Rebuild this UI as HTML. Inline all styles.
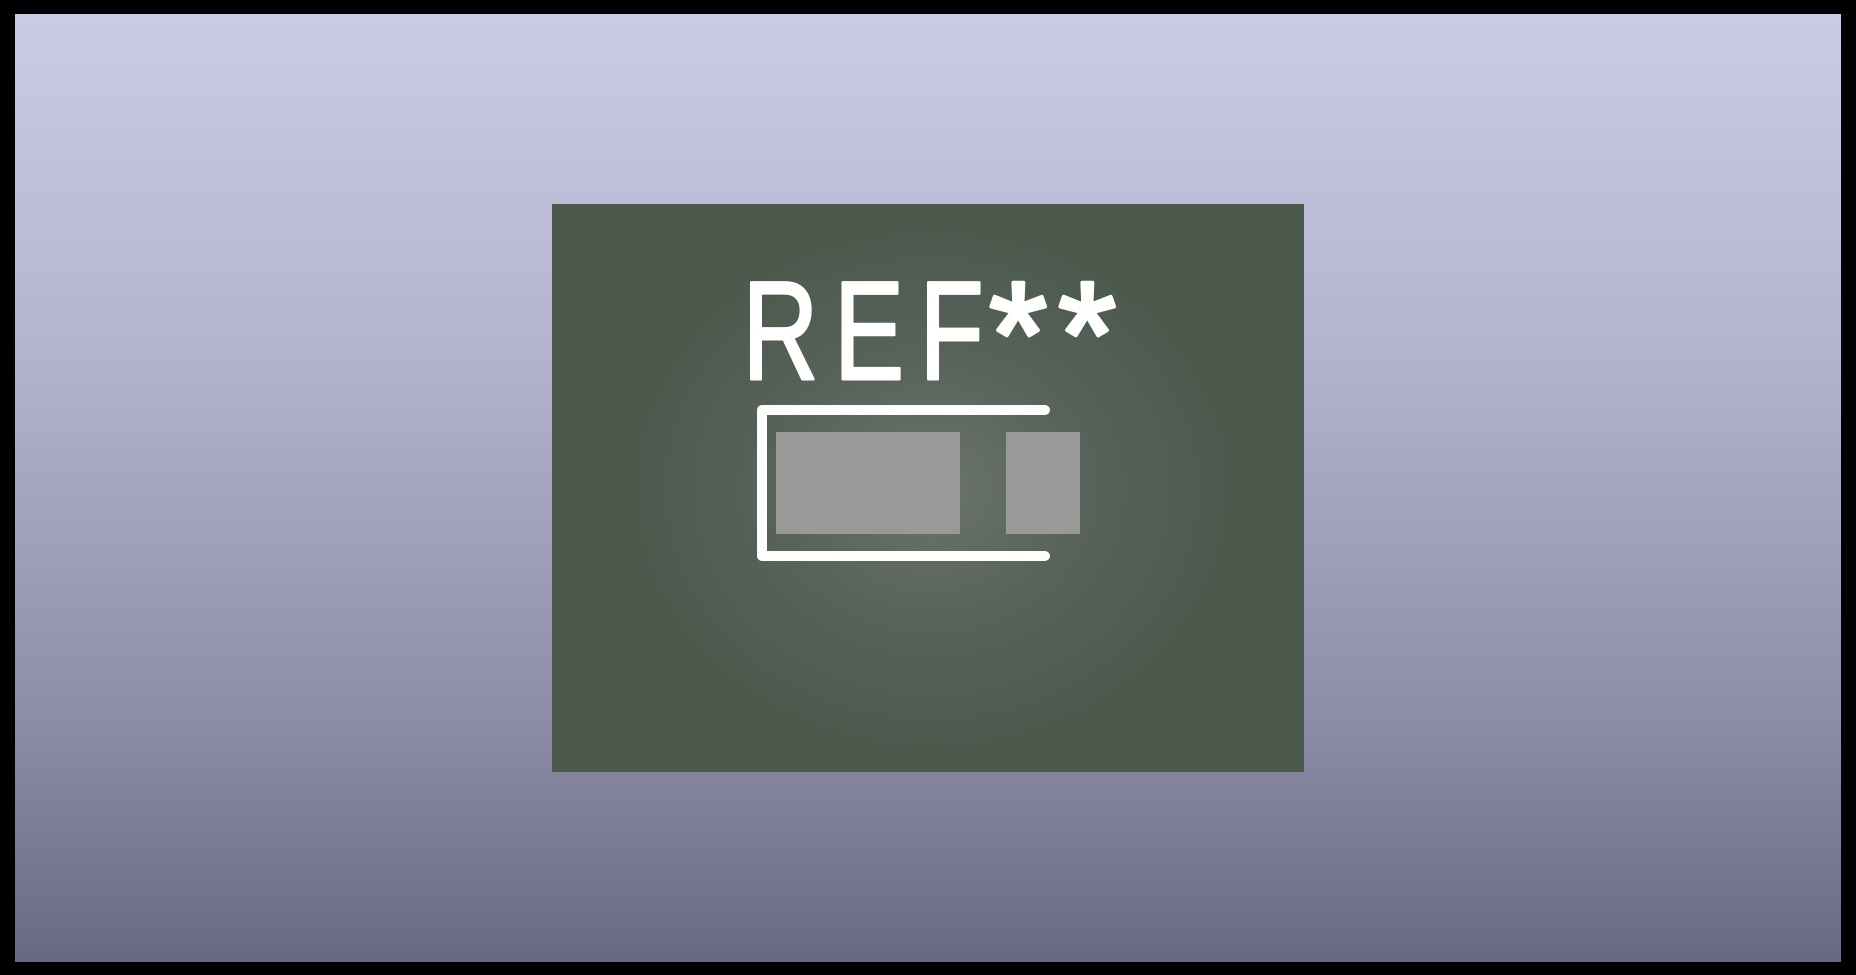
<!DOCTYPE html>
<html><head><style>
html,body{margin:0;padding:0;width:1856px;height:975px;overflow:hidden;background:#000}
.bg{position:absolute;left:15px;top:14px;width:1826px;height:948px;background:linear-gradient(#cbcbe5,#b4b4cf 35%,#8c8ca6 75%,#686883)}
.board{position:absolute;left:552px;top:204px;width:752px;height:568px;background:radial-gradient(ellipse 300px 260px at 380px 285px,#6a746b,#58635a 50%,#4c5a4e 100%)}
svg{position:absolute;left:0;top:0}
</style></head><body>
<div class="bg"></div>
<div class="board"></div>
<svg width="1856" height="975" viewBox="0 0 1856 975">
<g transform="scale(0.75 1)">
<text y="379" font-family="Liberation Sans, sans-serif" font-size="140" fill="#fff" stroke="#fff" stroke-width="3" stroke-linejoin="round"><tspan x="990">R</tspan><tspan x="1112">E</tspan><tspan x="1226">F</tspan></text>
</g>
<text y="386" font-family="Liberation Sans, sans-serif" font-size="150" fill="#fff" stroke="#fff" stroke-width="4" stroke-linejoin="round"><tspan x="989">*</tspan><tspan x="1058">*</tspan></text>
<rect x="776" y="432" width="184" height="102" fill="#999"/>
<rect x="1006" y="432" width="74" height="102" fill="#999"/>
<path d="M1045 410 H762 V556 H1045" fill="none" stroke="#fff" stroke-width="10" stroke-linecap="round" stroke-linejoin="round"/>
</svg>
</body></html>
